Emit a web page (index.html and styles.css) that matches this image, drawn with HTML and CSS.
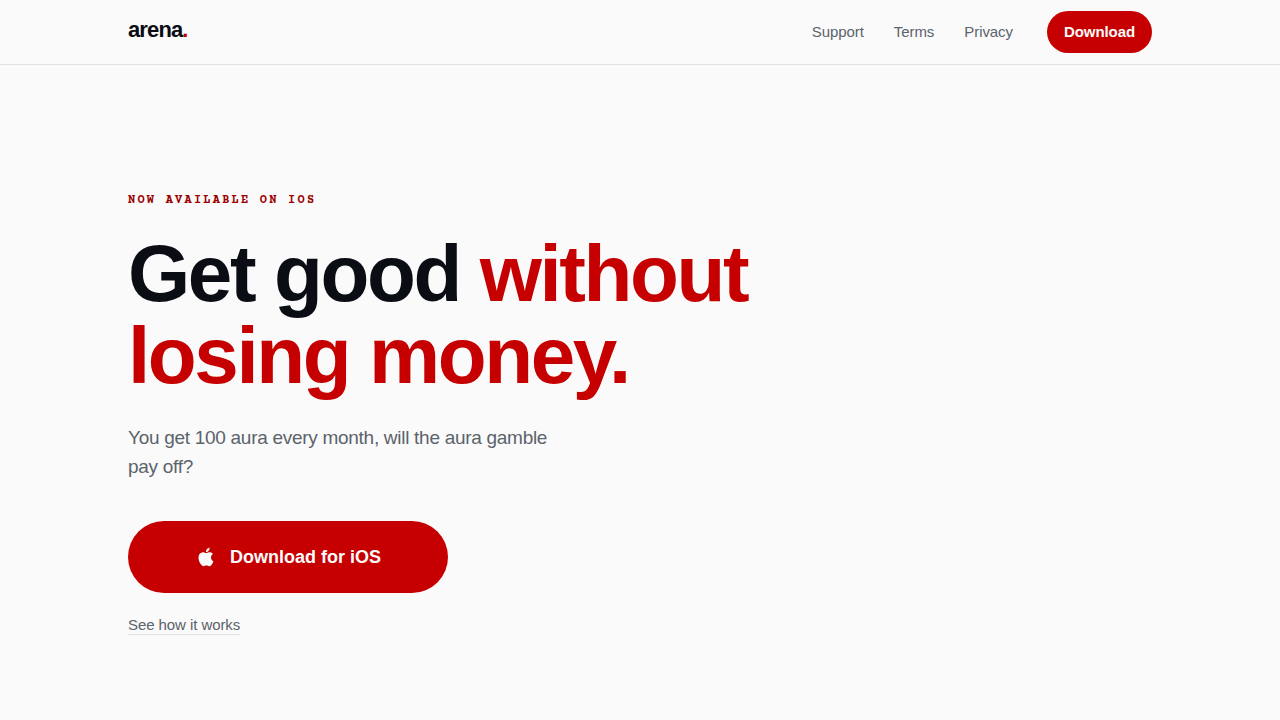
FILE: index.html
```html
<!DOCTYPE html>
<html lang="en">
<head>
    <meta charset="UTF-8">
    <meta name="viewport" content="width=device-width, initial-scale=1.0">
    <title>arena.</title>
    <link rel="stylesheet" href="styles.css">
</head>
<body>

<header class="site-header">
    <div class="container header-inner">
        <a href="#" class="logo">arena<span class="dot">.</span></a>
        <nav class="nav">
            <a href="#support">Support</a>
            <a href="#terms">Terms</a>
            <a href="#privacy">Privacy</a>
            <a href="#download" class="nav-button">Download</a>
        </nav>
    </div>
</header>

<main class="container hero">
    <p class="eyebrow">Now available on iOS</p>
    <h1>Get good <span class="accent">without</span> <span class="accent">losing money.</span></h1>
    <p class="lead">You get 100 aura every month, will the aura gamble pay off?</p>
    <a href="#download" class="download-button">
        <svg class="apple-icon" viewBox="0 0 24 24" fill="currentColor" aria-hidden="true">
            <path d="M18.71 19.5c-.83 1.24-1.71 2.45-3.05 2.47-1.34.03-1.77-.79-3.29-.79-1.53 0-2 .77-3.27.82-1.31.05-2.3-1.32-3.14-2.53C4.25 17 2.94 12.45 4.7 9.39c.87-1.52 2.43-2.48 4.12-2.51 1.28-.02 2.5.87 3.29.87.78 0 2.26-1.07 3.81-.91.65.03 2.47.26 3.64 1.98-.09.06-2.17 1.28-2.15 3.81.03 3.02 2.65 4.03 2.68 4.04-.03.07-.42 1.44-1.38 2.83M13 3.5c.73-.83 1.94-1.46 2.94-1.5.13 1.17-.34 2.35-1.04 3.19-.69.85-1.83 1.51-2.95 1.42-.15-1.15.41-2.35 1.05-3.11z"/>
        </svg>
        Download for iOS
    </a>
    <a href="#how" class="more-link">See how it works</a>
</main>

</body>
</html>
```
FILE: styles.css
```css
* {
    box-sizing: border-box;
}
body {
    font-family: "Liberation Sans", Arial, sans-serif;
    margin: 0;
    background-color: #fafafa;
    color: #0a0d14;
}
a {
    color: inherit;
    text-decoration: none;
}
.container {
    width: 80%;
    margin: 0 auto;
}
.site-header {
    border-bottom: 1px solid #e0e2e4;
}
.header-inner {
    display: flex;
    justify-content: space-between;
    align-items: center;
    height: 64px;
}
.logo {
    font-size: 22px;
    font-weight: bold;
    line-height: 26px;
    letter-spacing: -0.04em;
    padding-bottom: 4px;
}
.dot, .accent {
    color: #c60000;
}
.nav {
    display: flex;
    align-items: center;
    gap: 30px;
    font-size: 15px;
    line-height: 18px;
    letter-spacing: -0.005em;
    color: #5b636b;
}
.nav-button {
    margin-left: 4px;
    padding: 12px 17px;
    border-radius: 21px;
    background-color: #c60000;
    color: #fafafa;
    font-weight: bold;
}
.hero {
    display: flex;
    flex-direction: column;
    align-items: flex-start;
    padding: 128px 0 80px;
}
.eyebrow {
    margin: 0 0 24px;
    font-family: "Courier Prime", "Nimbus Mono PS", FreeMono, "Courier 10 Pitch", "Liberation Mono", monospace;
    font-size: 12px;
    font-weight: bold;
    line-height: 16px;
    letter-spacing: 0.185em;
    text-transform: uppercase;
    color: #9a0000;
}
h1 {
    max-width: 680px;
    margin: 0 0 26px;
    font-size: 80px;
    line-height: 82px;
    letter-spacing: -0.03em;
}
.lead {
    max-width: 440px;
    margin: 0 0 40px;
    font-size: 19px;
    line-height: 29px;
    letter-spacing: -0.015em;
    color: #5b636b;
}
.download-button {
    display: flex;
    justify-content: center;
    align-items: center;
    gap: 13px;
    width: 320px;
    max-width: 100%;
    height: 72px;
    border-radius: 36px;
    background-color: #c60000;
    color: #fafafa;
    font-size: 18px;
    font-weight: bold;
}
.apple-icon {
    width: 22px;
    height: 22px;
}
.more-link {
    margin-top: 23px;
    border-bottom: 1px solid #dfe3e4;
    font-size: 15px;
    line-height: 18px;
    letter-spacing: -0.005em;
    color: #5b636b;
}
```
